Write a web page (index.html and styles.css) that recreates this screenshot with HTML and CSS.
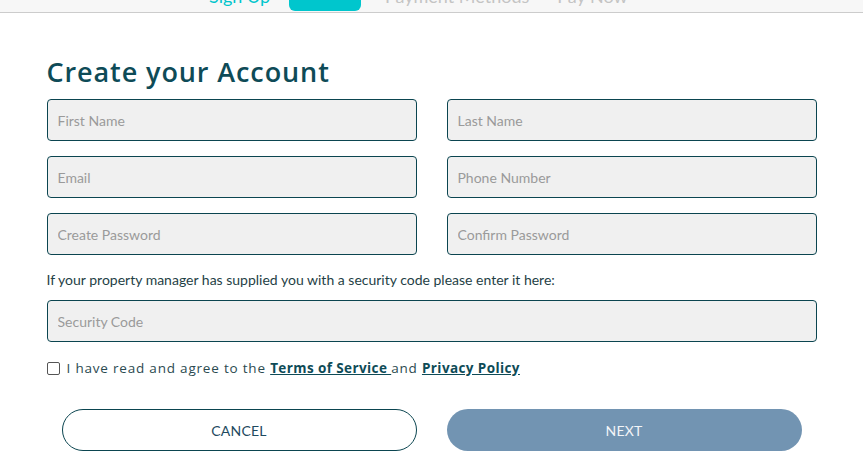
FILE: index.html
```html
<!DOCTYPE html>
<html>
<head>
<meta charset="utf-8">
<link rel="stylesheet" href="styles.css">
</head>
<body>
<nav class="steps">
  <div class="steps-inner">
    <span class="step step-active-text">Sign Up</span>
    <span class="step-pill"></span>
    <span class="step step-muted">Payment Methods</span>
    <span class="step step-muted step-last">Pay Now</span>
  </div>
</nav>
<main class="wrap">
  <h1 class="title">Create your Account</h1>
  <div class="grid">
    <input class="field" placeholder="First Name">
    <input class="field" placeholder="Last Name">
    <input class="field" placeholder="Email">
    <input class="field" placeholder="Phone Number">
    <input class="field" placeholder="Create Password">
    <input class="field" placeholder="Confirm Password">
  </div>
  <p class="hint">If your property manager has supplied you with a security code please enter it here:</p>
  <input class="field field-full" placeholder="Security Code">
  <label class="agree">
    <span class="box"></span>
    <span>I have read and agree to the <a class="link">Terms of Service </a>and <a class="link">Privacy Policy</a></span>
  </label>
  <div class="actions">
    <button class="btn btn-cancel">CANCEL</button>
    <button class="btn btn-next">NEXT</button>
  </div>
</main>
</body>
</html>
```
FILE: styles.css
```css
html, body {
  margin: 0;
  padding: 0;
  background: #ffffff;
}
body {
  font-family: Lato, "Open Sans", sans-serif;
  overflow: hidden;
}
.steps {
  height: 12px;
  background: #f7f7f7;
  border-bottom: 1px solid #cccccc;
  overflow: hidden;
  position: relative;
}
.steps-inner {
  display: flex;
  align-items: flex-end;
  height: 12px;
  padding-left: 209px;
}
.step {
  font-size: 18px;
  line-height: 18px;
  margin-bottom: 7px;
  white-space: nowrap;
}
.step-active-text {
  color: #00c5cc;
  width: 66px;
}
.step-pill {
  display: block;
  width: 72px;
  height: 30px;
  background: #00c6cd;
  border-radius: 0 0 6px 6px;
  margin-left: 14px;
  margin-bottom: 1px;
  align-self: flex-end;
}
.step-muted {
  color: #c4c4c4;
  margin-left: 24px;
}
.step-last {
  margin-left: 28px;
}
.wrap {
  width: 770px;
  margin: 0 auto;
  padding-top: 45px;
}
.title {
  margin: 0 0 13px 0;
  font-family: "Open Sans", sans-serif;
  font-weight: 600;
  font-size: 27px;
  line-height: 28px;
  color: #0e4b57;
  letter-spacing: 0.9px;
}
.grid {
  display: grid;
  grid-template-columns: 1fr 1fr;
  column-gap: 30px;
  row-gap: 15px;
}
.field {
  box-sizing: border-box;
  height: 42px;
  width: 100%;
  border: 1px solid #0b4550;
  border-radius: 4px;
  background: #f0f0f0;
  padding: 0 10px;
  font-family: Lato, sans-serif;
  font-size: 14px;
  color: #333;
  outline: none;
}
.field::placeholder {
  color: #9a9a9a;
}
.hint {
  margin: 16px 0 12px 0;
  font-size: 14px;
  line-height: 17px;
  color: #1f3f46;
}
.field-full {
  display: block;
}
.agree {
  display: flex;
  align-items: center;
  margin-top: 17px;
  font-family: "Open Sans", sans-serif;
  font-size: 13.5px;
  letter-spacing: 0.8px;
  color: #2b4a50;
}
.box {
  box-sizing: border-box;
  width: 13px;
  height: 13px;
  border: 1px solid #555;
  border-radius: 2px;
  margin-right: 7px;
  background: #fff;
  flex: none;
}
.link {
  font-weight: 700;
  color: #0e4b57;
  text-decoration: underline;
  letter-spacing: 0.4px;
}
.actions {
  display: grid;
  grid-template-columns: 1fr 1fr;
  column-gap: 30px;
  margin-top: 32px;
}
.btn {
  box-sizing: border-box;
  height: 42px;
  border-radius: 21px;
  font-family: Lato, sans-serif;
  font-size: 14px;
  letter-spacing: 0.2px;
  cursor: pointer;
}
.btn-cancel {
  margin-left: 15px;
  background: #fff;
  border: 1px solid #0b4550;
  color: #1e4a60;
}
.btn-next {
  margin-right: 15px;
  background: #7294b2;
  border: none;
  color: #f2f5f8;
}
```
